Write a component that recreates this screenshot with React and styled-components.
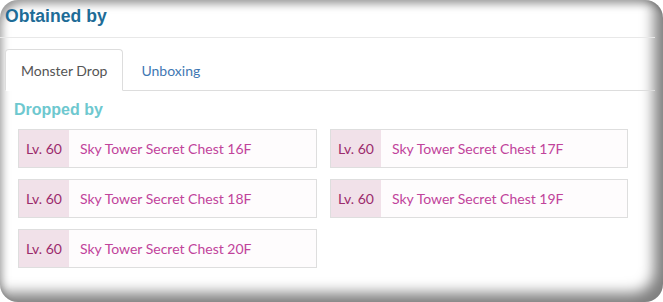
import React from "react";
import styled, { createGlobalStyle } from "styled-components";

const Global = createGlobalStyle`
  html, body { margin: 0; padding: 0; background: #ffffff; }
  body { width: 663px; height: 302px; overflow: hidden; }
`;

const Frame = styled.div`
  box-sizing: border-box;
  width: 663px;
  height: 302px;
  border-radius: 18px;
  background: #ffffff;
  box-shadow: inset -13px -13px 14px -4px rgba(0, 0, 0, 0.5),
    inset 5px 7px 8px -3px rgba(0, 0, 0, 0.4);
  padding: 6px 8px 0 5px;
  display: flex;
  flex-direction: column;
`;

const Title = styled.h2`
  margin: 0 0 0 -5px;
  padding: 0 0 11px 5px;
  font-family: "Liberation Sans", Arial, sans-serif;
  font-weight: bold;
  font-size: 17.6px;
  line-height: 20px;
  color: #1e6c97;
  border-bottom: 1px solid #e8e8e8;
`;

const Tabs = styled.div`
  display: flex;
  margin-top: 11px;
  border-bottom: 1px solid #dddddd;
  font-family: Lato, "Open Sans", sans-serif;
  font-size: 14px;
`;

const Tab = styled.div`
  box-sizing: border-box;
  height: 42px;
  padding: 0 15px;
  margin-right: 2px;
  margin-bottom: -1px;
  display: flex;
  align-items: center;
  border: 1px solid ${(p) => (p.$active ? "#dddddd" : "transparent")};
  border-bottom-color: ${(p) => (p.$active ? "#ffffff" : "transparent")};
  border-radius: 4px 4px 0 0;
  background: ${(p) => (p.$active ? "#ffffff" : "transparent")};
  color: ${(p) => (p.$active ? "#555555" : "#3f78b3")};
`;

const SubTitle = styled.h3`
  margin: 10px 0 0 9px;
  font-family: "Liberation Sans", Arial, sans-serif;
  font-weight: bold;
  font-size: 16px;
  line-height: 18px;
  color: #6ec8cf;
`;

const Grid = styled.div`
  display: grid;
  grid-template-columns: 299px 298px;
  column-gap: 13px;
  row-gap: 11px;
  margin: 10px 0 0 13px;
`;

const Item = styled.div`
  box-sizing: border-box;
  height: 39px;
  display: flex;
  border: 1px solid #dedede;
  background: #fefcfd;
  font-family: Lato, "Open Sans", sans-serif;
  font-size: 14px;
`;

const Level = styled.div`
  width: 50px;
  display: flex;
  align-items: center;
  justify-content: center;
  background: #f1e1e9;
  color: #9c2b6c;
`;

const Name = styled.div`
  display: flex;
  align-items: center;
  padding-left: 11px;
  color: #c1439b;
`;

const floors = ["16F", "17F", "18F", "19F", "20F"];

export default function App() {
  return (
    <>
      <Global />
      <Frame>
        <Title>Obtained by</Title>
        <Tabs>
          <Tab $active>Monster Drop</Tab>
          <Tab>Unboxing</Tab>
        </Tabs>
        <SubTitle>Dropped by</SubTitle>
        <Grid>
          {floors.map((f) => (
            <Item key={f}>
              <Level>Lv. 60</Level>
              <Name>Sky Tower Secret Chest {f}</Name>
            </Item>
          ))}
        </Grid>
      </Frame>
    </>
  );
}
